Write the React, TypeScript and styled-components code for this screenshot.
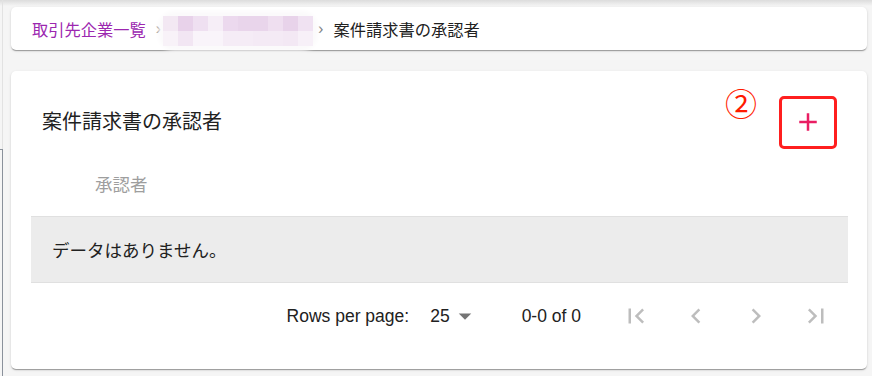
import React from "react";
import styled, { createGlobalStyle } from "styled-components";

const GlobalStyle = createGlobalStyle`
  html, body { margin: 0; padding: 0; }
  body {
    width: 872px;
    height: 376px;
    overflow: hidden;
    background: #f5f5f5 linear-gradient(to bottom, #dcdcdc 0px, #f5f5f5 6px) no-repeat;
    background-size: 100% 6px;
    font-family: "Liberation Sans", "Noto Sans CJK JP", sans-serif;
  }
  * { box-sizing: border-box; }
`;

const Page = styled.div`
  display: flex;
  height: 376px;
`;

const LeftEdge = styled.div`
  width: 3px;
  display: flex;
  flex-direction: column;
`;

const EdgeTop = styled.div`
  height: 149px;
  border-right: 1px solid #e2e2e2;
`;

const EdgeBottom = styled.div`
  flex: 1;
  border-top: 1px solid #8a919b;
  border-right: 1px solid #8a919b;
`;

const Content = styled.div`
  flex: 1;
  padding: 7px 5px 0 8px;
  display: flex;
  flex-direction: column;
  gap: 21px;
`;

const Paper = styled.div`
  background: #fff;
  border-radius: 5px;
  box-shadow: 0px 2px 1px -1px rgba(0, 0, 0, 0.2), 0px 1px 1px 0px rgba(0, 0, 0, 0.14),
    0px 1px 3px 0px rgba(0, 0, 0, 0.12);
`;

const BreadcrumbCard = styled(Paper)`
  height: 43px;
  display: flex;
  align-items: center;
  padding-left: 21px;
  font-family: "Noto Sans CJK JP", sans-serif;
  font-size: 16.25px;
  color: #212121;
`;

const CrumbLink = styled.span`
  color: #9c27b0;
`;

const Sep = styled.span<{ $l: number; $r: number }>`
  font-family: "Liberation Sans", sans-serif;
  font-size: 16px;
  color: #757575;
  margin: 0 ${(p) => p.$r}px 0 ${(p) => p.$l}px;
`;

const Redaction = styled.span`
  display: grid;
  grid-template-columns: repeat(10, 15px);
  grid-template-rows: 15px 15px;
  margin-top: 5px;
  border-radius: 12px;
  box-shadow: 0 0 5px 5px #fbfafb;
  filter: blur(0.6px);
`;

const Block = styled.span<{ $c: string }>`
  background: ${(p) => p.$c};
`;

const Card = styled(Paper)`
  padding: 14px 19px 20px 20px;
  display: flex;
  flex-direction: column;
`;

const Toolbar = styled.div`
  height: 74px;
  display: flex;
  align-items: center;
`;

const Title = styled.div`
  flex: 1;
  padding-left: 11px;
  padding-bottom: 4px;
  font-family: "Noto Sans CJK JP", sans-serif;
  font-size: 20px;
  color: #212121;
`;

const Marker = styled.span`
  align-self: flex-start;
  margin-top: 2px;
  margin-right: 22px;
  font-family: "Noto Sans CJK JP", sans-serif;
  font-size: 32px;
  font-weight: 400;
  line-height: 30px;
  color: #ff1a00;
`;

const AddBox = styled.div`
  width: 58px;
  height: 53px;
  margin-right: 11px;
  border: 3.5px solid #ff1f1f;
  border-radius: 5px;
  display: flex;
  align-items: center;
  justify-content: center;
`;

const AddButton = styled.button`
  border: 0;
  background: transparent;
  padding: 0;
  display: flex;
  align-items: center;
  justify-content: center;
  color: #e91e63;
`;

const TableHead = styled.div`
  height: 58px;
  display: flex;
  align-items: center;
  padding-bottom: 9px;
  border-bottom: 1px solid #e0e0e0;
`;

const HeadCell = styled.div`
  padding-left: 64px;
  font-family: "Noto Sans CJK JP", sans-serif;
  font-size: 17.5px;
  color: #9e9e9e;
`;

const EmptyRow = styled.div`
  height: 66px;
  display: flex;
  align-items: center;
  padding-left: 21px;
  background: #ececec;
  border-bottom: 1px solid #e0e0e0;
  font-family: "Noto Sans CJK JP", sans-serif;
  font-size: 17.5px;
  color: #212121;
`;

const Pagination = styled.div`
  height: 66px;
  display: flex;
  align-items: center;
  justify-content: flex-end;
  padding-right: 2px;
  font-family: "Liberation Sans", sans-serif;
  font-size: 17.5px;
  color: #212121;
`;

const SelectBox = styled.div`
  display: flex;
  align-items: center;
  margin: 0 42px 0 21px;
`;

const Actions = styled.div`
  display: flex;
  margin-left: 25px;
`;

const IconBtn = styled.button`
  width: 60px;
  height: 60px;
  border: 0;
  padding: 0;
  background: transparent;
  display: flex;
  align-items: center;
  justify-content: center;
  color: rgba(0, 0, 0, 0.26);
`;

const Icon = ({ d, size = 30, color = "currentColor" }: { d: string; size?: number; color?: string }) => (
  <svg width={size} height={size} viewBox="0 0 24 24" fill={color}>
    <path d={d} />
  </svg>
);

const ICONS = {
  add: "M19 13h-6v6h-2v-6H5v-2h6V5h2v6h6v2z",
  drop: "M7 10l5 5 5-5z",
  first: "M18.41 16.59L13.82 12l4.59-4.59L17 6l-6 6 6 6zM6 6h2v12H6z",
  prev: "M15.41 16.59L10.83 12l4.58-4.59L14 6l-6 6 6 6 1.41-1.41z",
  next: "M8.59 16.59L13.17 12 8.59 7.41 10 6l6 6-6 6-1.41-1.41z",
  last: "M5.59 7.41L10.18 12l-4.59 4.59L7 18l6-6-6-6zM16 6h2v12h-2z",
};

const ROW1 = ["#f3e8f3", "#e8d2ea", "#efe0f1", "#f6eef7", "#ecd9ee", "#e9d5eb", "#e9d5eb", "#efdff0", "#e8d3ea", "#f0e2f2"];
const ROW2 = ["#f8f2f8", "#f2e6f3", "#f9f4fa", "#f9f4fa", "#f5ecf6", "#f5ecf6", "#f4eaf5", "#f4eaf5", "#f3e8f4", "#f7f0f8"];

export default function App() {
  return (
    <>
      <GlobalStyle />
      <Page>
        <LeftEdge>
          <EdgeTop />
          <EdgeBottom />
        </LeftEdge>
        <Content>
          <BreadcrumbCard>
            <CrumbLink>取引先企業一覧</CrumbLink>
            <Sep $l={10} $r={2}>›</Sep>
            <Redaction>
              {[...ROW1, ...ROW2].map((c, i) => (
                <Block key={i} $c={c} />
              ))}
            </Redaction>
            <Sep $l={5} $r={10}>›</Sep>
            <span>案件請求書の承認者</span>
          </BreadcrumbCard>
          <Card>
            <Toolbar>
              <Title>案件請求書の承認者</Title>
              <Marker>②</Marker>
              <AddBox>
                <AddButton>
                  <Icon d={ICONS.add} />
                </AddButton>
              </AddBox>
            </Toolbar>
            <TableHead>
              <HeadCell>承認者</HeadCell>
            </TableHead>
            <EmptyRow>データはありません。</EmptyRow>
            <Pagination>
              <span>Rows per page:</span>
              <SelectBox>
                <span>25</span>
                <Icon d={ICONS.drop} color="rgba(0,0,0,0.54)" />
              </SelectBox>
              <span>0-0 of 0</span>
              <Actions>
                <IconBtn><Icon d={ICONS.first} /></IconBtn>
                <IconBtn><Icon d={ICONS.prev} /></IconBtn>
                <IconBtn><Icon d={ICONS.next} /></IconBtn>
                <IconBtn><Icon d={ICONS.last} /></IconBtn>
              </Actions>
            </Pagination>
          </Card>
        </Content>
      </Page>
    </>
  );
}
